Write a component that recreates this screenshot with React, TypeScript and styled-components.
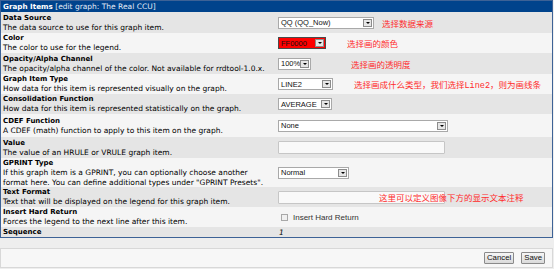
import styled, { createGlobalStyle } from "styled-components";

const GlobalStyle = createGlobalStyle`
  body {
    margin: 0;
    background: #eeeeee;
    font-family: "DejaVu Sans", Verdana, sans-serif;
  }
`;

const Page = styled.div`
  width: 554px;
  height: 269px;
  overflow: hidden;
`;

const Panel = styled.div`
  width: 553px;
  box-sizing: border-box;
  border: 1px solid #3d6296;
`;

const Header = styled.div`
  height: 11px;
  line-height: 11px;
  background: #00438c;
  color: #ffffff;
  font-size: 7.5px;
  padding-left: 2px;

  b {
    font-size: 7.2px;
  }

  span {
    color: #e4ecf7;
  }
`;

const Row = styled.div<{ $h: number; $alt: boolean }>`
  display: grid;
  grid-template-columns: 277px 1fr;
  height: ${p => p.$h}px;
  background: ${p => (p.$alt ? "#f5f5f5" : "#e5e5e5")};
`;

const LeftCell = styled.div`
  display: flex;
  flex-direction: column;
  justify-content: center;
  padding-left: 2px;
  color: #000;
`;

const Title = styled.div`
  font-weight: bold;
  font-size: 7px;
  line-height: 10px;
`;

const Desc = styled.div`
  font-size: 7.5px;
  line-height: 9.5px;
`;

const RightCell = styled.div`
  position: relative;
  display: flex;
  align-items: center;
`;

const SelectBox = styled.div<{ $w: number; $bg?: string }>`
  width: ${p => p.$w}px;
  height: 12px;
  box-sizing: border-box;
  border: 1px solid ${p => (p.$bg ? "#4a4a4a" : "#a9a9a9")};
  background: ${p => p.$bg ?? "#ffffff"};
  display: flex;
  align-items: center;
  font-family: "Liberation Sans", Arial, sans-serif;
  font-size: 7.5px;
  color: #111;
`;

const SelectText = styled.span`
  flex: 1;
  padding-left: 2px;
  white-space: nowrap;
`;

const ArrowBtn = styled.span`
  flex: none;
  width: 9px;
  height: 8px;
  margin-right: 1px;
  box-sizing: border-box;
  border: 1px solid #8c8c8c;
  background: #e6e6e6;
  display: flex;
  align-items: center;
  justify-content: center;

  &::after {
    content: "";
    border-left: 2px solid transparent;
    border-right: 2px solid transparent;
    border-top: 2px solid #000;
  }
`;

const TextInput = styled.div<{ $w: number }>`
  width: ${p => p.$w}px;
  height: 13px;
  box-sizing: border-box;
  border: 1px solid #c6c6c6;
  border-radius: 1px;
  background: #f9f9f9;
`;

const CheckLabel = styled.label`
  display: flex;
  align-items: center;
  gap: 5px;
  padding-left: 3px;
  font-family: "Liberation Sans", Arial, sans-serif;
  font-size: 8px;
  color: #333;
`;

const CheckBox = styled.span`
  width: 7px;
  height: 7px;
  box-sizing: border-box;
  border: 1px solid #a8a8a8;
  background: #f0f0f0;
`;

const SeqValue = styled.span`
  font-style: italic;
  font-size: 7.5px;
  padding-left: 1px;
`;

const Note = styled.span<{ $x: number }>`
  position: absolute;
  left: ${p => p.$x}px;
  top: 50%;
  transform: translateY(-50%);
  color: #ff2b2b;
  font-family: "Liberation Mono", "Noto Sans CJK SC", monospace;
  font-size: 8.5px;
  white-space: nowrap;
`;

const ButtonBar = styled.div`
  margin-top: 10px;
  width: 553px;
  height: 20px;
  box-sizing: border-box;
  border: 1px solid #d8d8d8;
  background: #f7f7f7;
  display: flex;
  justify-content: flex-end;
  align-items: center;
  gap: 7px;
  padding-right: 7px;
`;

const Button = styled.button`
  height: 12px;
  padding: 0 2px;
  border: 1px solid #8a8a8a;
  border-radius: 1px;
  background: linear-gradient(#f6f6f6, #dadada);
  font-family: "Liberation Sans", Arial, sans-serif;
  font-size: 7.8px;
  line-height: 10px;
  color: #111;
`;

const Select = ({ w, value, bg }: { w: number; value: string; bg?: string }) => (
  <SelectBox $w={w} $bg={bg}>
    <SelectText>{value}</SelectText>
    <ArrowBtn />
  </SelectBox>
);

type Item = {
  title: string;
  desc?: string[];
  h: number;
  control?: React.ReactNode;
  note?: { x: number; text: string };
};

const items: Item[] = [
  {
    title: "Data Source",
    desc: ["The data source to use for this graph item."],
    h: 21,
    control: <Select w={96} value="QQ (QQ_Now)" />,
    note: { x: 104, text: "选择数据来源" },
  },
  {
    title: "Color",
    desc: ["The color to use for the legend."],
    h: 20,
    control: <Select w={48} value="FF0000" bg="#ff0000" />,
    note: { x: 69, text: "选择画的颜色" },
  },
  {
    title: "Opacity/Alpha Channel",
    desc: ["The opacity/alpha channel of the color. Not available for rrdtool-1.0.x."],
    h: 21,
    control: <Select w={33} value="100%" />,
    note: { x: 73, text: "选择画的透明度" },
  },
  {
    title: "Graph Item Type",
    desc: ["How data for this item is represented visually on the graph."],
    h: 20,
    control: <Select w={55} value="LINE2" />,
    note: { x: 76, text: "选择画成什么类型，我们选择Line2，则为画线条" },
  },
  {
    title: "Consolidation Function",
    desc: ["How data for this item is represented statistically on the graph."],
    h: 20,
    control: <Select w={54} value="AVERAGE" />,
  },
  {
    title: "CDEF Function",
    desc: ["A CDEF (math) function to apply to this item on the graph."],
    h: 23,
    control: <Select w={170} value="None" />,
  },
  {
    title: "Value",
    desc: ["The value of an HRULE or VRULE graph item."],
    h: 21,
    control: <TextInput $w={167} />,
  },
  {
    title: "GPRINT Type",
    desc: [
      "If this graph item is a GPRINT, you can optionally choose another",
      'format here. You can define additional types under "GPRINT Presets".',
    ],
    h: 29,
    control: <Select w={71} value="Normal" />,
  },
  {
    title: "Text Format",
    desc: ["Text that will be displayed on the legend for this graph item."],
    h: 20,
    control: <TextInput $w={167} />,
    note: { x: 101, text: "这里可以定义图像下方的显示文本注释" },
  },
  {
    title: "Insert Hard Return",
    desc: ["Forces the legend to the next line after this item."],
    h: 20,
    control: (
      <CheckLabel>
        <CheckBox />
        Insert Hard Return
      </CheckLabel>
    ),
  },
  {
    title: "Sequence",
    h: 10,
    control: <SeqValue>1</SeqValue>,
  },
];

const App = () => (
  <Page>
    <GlobalStyle />
    <Panel>
      <Header>
        <b>Graph Items</b> <span>[edit graph: The Real CCU]</span>
      </Header>
      {items.map((it, i) => (
        <Row key={it.title} $h={it.h} $alt={i % 2 === 1}>
          <LeftCell>
            <Title>{it.title}</Title>
            {it.desc?.map(d => <Desc key={d}>{d}</Desc>)}
          </LeftCell>
          <RightCell>
            {it.control}
            {it.note && <Note $x={it.note.x}>{it.note.text}</Note>}
          </RightCell>
        </Row>
      ))}
    </Panel>
    <ButtonBar>
      <Button>Cancel</Button>
      <Button>Save</Button>
    </ButtonBar>
  </Page>
);

export default App;
